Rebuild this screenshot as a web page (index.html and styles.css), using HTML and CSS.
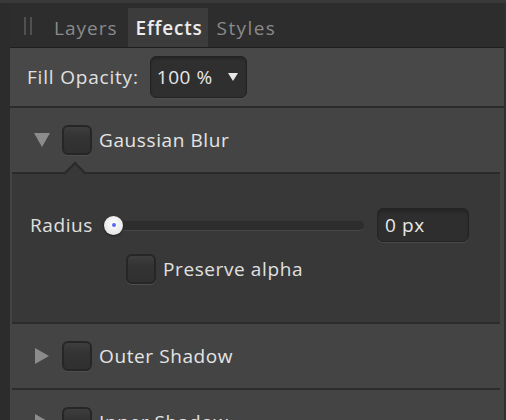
FILE: index.html
```html
<!DOCTYPE html>
<html>
<head>
<meta charset="utf-8">
<link rel="stylesheet" href="styles.css">
</head>
<body>
<div class="page">
  <div class="gutter"></div>
  <div class="panel">
    <div class="tabs">
      <div class="grip"><span></span><span></span></div>
      <div class="tab">Layers</div>
      <div class="tab active">Effects</div>
      <div class="tab">Styles</div>
    </div>
    <div class="fill-row">
      <span class="label">Fill Opacity:</span>
      <div class="dropdown"><span>100 %</span><span class="caret"></span></div>
    </div>
    <div class="fx-list">
      <div class="fx-head">
        <span class="disclosure down"></span>
        <span class="check"></span>
        <span class="fx-name">Gaussian Blur</span>
      </div>
      <div class="fx-body">
        <span class="notch"></span>
        <div class="radius-row">
          <span class="label">Radius</span>
          <div class="slider"><span class="knob"><span class="dot"></span></span></div>
          <div class="field">0 px</div>
        </div>
        <div class="alpha-row">
          <span class="check"></span>
          <span class="label">Preserve alpha</span>
        </div>
      </div>
      <div class="fx-head closed">
        <span class="disclosure right"></span>
        <span class="check"></span>
        <span class="fx-name">Outer Shadow</span>
      </div>
      <div class="fx-head closed">
        <span class="disclosure right"></span>
        <span class="check"></span>
        <span class="fx-name">Inner Shadow</span>
      </div>
    </div>
  </div>
</div>
</body>
</html>
```
FILE: styles.css
```css
html, body {
  margin: 0;
  padding: 0;
  background: #2b2b2b;
  font-family: "Open Sans", Lato, sans-serif;
  font-size: 19px;
  letter-spacing: 0.6px;
  color: #e2e2e2;
}
.page {
  display: flex;
  width: 506px;
  height: 420px;
  overflow: hidden;
  border-top: 3px solid #393939;
  box-sizing: border-box;
}
.gutter {
  width: 10px;
  flex: none;
  background: #2c2c2c;
}
.panel {
  flex: 1;
  display: flex;
  flex-direction: column;
  border-right: 2px solid #303030;
  min-width: 0;
}
.tabs {
  height: 44px;
  flex: none;
  background: #2d2d2d;
  border-bottom: 1px solid #1e1e1e;
  display: flex;
  align-items: flex-end;
}
.grip {
  display: flex;
  gap: 4px;
  align-self: center;
  margin: 2px 13px 0 14px;
  height: 18px;
}
.grip span {
  width: 2px;
  height: 18px;
  background: #505050;
}
.tab {
  height: 39px;
  line-height: 40px;
  padding: 0 9px;
  color: #8a8a8a;
  letter-spacing: 1px;
  box-sizing: border-box;
}
.tab:last-child {
  padding-left: 9px;
  letter-spacing: 1.4px;
}
.tab.active {
  background: #3c3c3c;
  color: #ececec;
  font-weight: 600;
  margin-left: 2px;
  padding: 0 5px 0 7px;
  letter-spacing: 0.8px;
}
.fill-row {
  height: 58px;
  flex: none;
  background: #484848;
  border-bottom: 2px solid #2b2b2b;
  display: flex;
  align-items: center;
  padding-left: 17px;
  gap: 11px;
}
.label {
  color: #e0e0e0;
}
.fill-row .label {
  letter-spacing: 0.8px;
}
.dropdown {
  width: 97px;
  height: 42px;
  box-sizing: border-box;
  background: #2f2f2f;
  border: 1px solid #232323;
  border-radius: 6px;
  box-shadow: inset 0 2px 2px #262626, 0 1px 0 #505050;
  display: flex;
  align-items: center;
  justify-content: space-between;
  padding: 0 8px 0 6px;
  color: #e8e8e8;
}
.caret {
  width: 0;
  height: 0;
  border-left: 5px solid transparent;
  border-right: 5px solid transparent;
  border-top: 8px solid #e8e8e8;
}
.fx-list {
  flex: 1;
  background: #444444;
  padding: 0 4px 0 2px;
  display: flex;
  flex-direction: column;
}
.fx-head {
  height: 64px;
  flex: none;
  display: flex;
  align-items: center;
  padding-left: 21px;
  box-sizing: border-box;
}
.fx-head.closed {
  height: 66px;
  border-top: 2px solid #2c2c2c;
}
.disclosure {
  width: 18px;
  display: flex;
  justify-content: center;
  margin-right: 11px;
}
.disclosure.down::before {
  content: "";
  border-left: 8px solid transparent;
  border-right: 8px solid transparent;
  border-top: 14px solid #8c8c8c;
}
.disclosure.right::before {
  content: "";
  border-top: 8px solid transparent;
  border-bottom: 8px solid transparent;
  border-left: 14px solid #8c8c8c;
}
.check {
  width: 30px;
  height: 30px;
  box-sizing: border-box;
  flex: none;
  border: 2px solid #262626;
  border-radius: 6px;
  background: linear-gradient(#3e3e3e, #333333 40%, #303030);
  box-shadow: 0 1px 0 #4e4e4e;
}
.fx-name {
  margin-left: 7px;
  color: #e4e4e4;
}
.fx-body {
  position: relative;
  height: 150px;
  flex: none;
  background: #383838;
  border-top: 2px solid #2a2a2a;
  display: flex;
  flex-direction: column;
  padding-top: 34px;
  box-sizing: border-box;
}
.notch {
  position: absolute;
  left: 55px;
  top: -9px;
  width: 14px;
  height: 14px;
  background: #383838;
  border-top: 2px solid #2a2a2a;
  border-left: 2px solid #2a2a2a;
  transform: rotate(45deg);
}
.radius-row {
  display: flex;
  align-items: center;
  padding-left: 18px;
  height: 34px;
}
.slider {
  position: relative;
  flex: none;
  width: 261px;
  height: 9px;
  margin-left: 10px;
  background: #2d2d2d;
  border-radius: 5px;
  box-shadow: 0 1px 0 #464646;
}
.knob {
  position: absolute;
  left: 1px;
  top: -5px;
  width: 19px;
  height: 19px;
  border-radius: 50%;
  background: radial-gradient(circle at 50% 40%, #ffffff, #e6e6e6 70%, #cfcfcf);
  display: flex;
  align-items: center;
  justify-content: center;
  box-shadow: 0 1px 2px rgba(0,0,0,0.5);
}
.dot {
  width: 4px;
  height: 4px;
  border-radius: 50%;
  background: #5a6cf0;
}
.field {
  flex: none;
  margin-left: 13px;
  width: 92px;
  height: 34px;
  box-sizing: border-box;
  background: #2e2e2e;
  border: 1px solid #232323;
  border-radius: 6px;
  box-shadow: inset 0 3px 2px #262626, 0 1px 0 #4a4a4a;
  padding-left: 7px;
  line-height: 32px;
  color: #e8e8e8;
}
.alpha-row {
  display: flex;
  align-items: center;
  padding-left: 114px;
  margin-top: 12px;
  gap: 7px;
}
```
